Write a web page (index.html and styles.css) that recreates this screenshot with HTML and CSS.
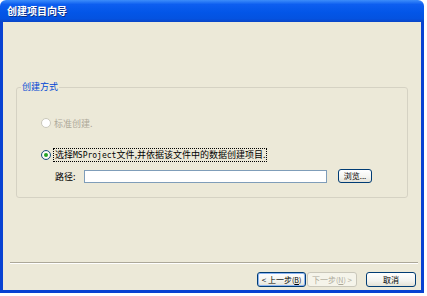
FILE: index.html
```html
<!DOCTYPE html>
<html lang="zh-CN">
<head>
  <meta charset="UTF-8">
  <title>创建项目向导</title>
  <link rel="stylesheet" href="styles.css">
</head>
<body>
  <div class="window">
    <div class="titlebar">创建项目向导</div>
    <div class="client">
      <fieldset class="group">
        <legend>创建方式</legend>
        <label class="option disabled">
          <span class="radio"></span>
          <span class="text">标准创建.</span>
        </label>
        <label class="option checked">
          <span class="radio"></span>
          <span class="text focus">选择<span class="mono">MSProject</span>文件,并依据该文件中的数据创建项目.</span>
        </label>
        <div class="path-row">
          <span class="path-label">路径:</span>
          <input class="path-input" type="text">
          <button class="btn small">浏览...</button>
        </div>
      </fieldset>
      <div class="spacer"></div>
      <div class="separator"></div>
      <div class="buttons">
        <button class="btn default">&lt; 上一步<span class="key">(<u>B</u>)</span></button>
        <button class="btn disabled">下一步<span class="key">(<u>N</u>)</span> &gt;</button>
        <button class="btn cancel">取消</button>
      </div>
    </div>
  </div>
</body>
</html>
```

FILE: styles.css
```css
* {
  margin: 0;
  padding: 0;
  box-sizing: border-box;
}
body {
  background: #fff;
  font-family: "Noto Sans CJK SC", "DejaVu Sans", sans-serif;
  font-size: 9px;
  color: #000;
}
.window {
  width: 424px;
  height: 293px;
  display: flex;
  flex-direction: column;
  border-radius: 6px 6px 0 0;
  overflow: hidden;
}
.titlebar {
  height: 22px;
  line-height: 21px;
  padding-left: 7px;
  color: #fff;
  font-weight: bold;
  font-size: 10px;
  background: linear-gradient(#3d8dfa 0%, #0d5ef0 20%, #0356e8 55%, #0452e0 85%, #0a45c6 100%);
  text-shadow: 1px 1px 0 #0a2f8a;
}
.client {
  flex: 1;
  display: flex;
  flex-direction: column;
  background: #ece9d8;
  border: 3px solid #0842d2;
  border-top: none;
}
.group {
  margin: 60px 13px 0 13px;
  height: 116px;
  border: 1px solid #d5d2c3;
  border-radius: 3px;
  padding: 0;
}
.group legend {
  color: #0046d5;
  padding: 0 1px;
  margin-left: 4px;
  line-height: 10px;
}
.option {
  display: flex;
  align-items: center;
  gap: 3px;
  height: 12px;
  margin-left: 24px;
}
.option.disabled {
  margin-top: 25px;
  color: #aca899;
}
.option.checked {
  margin-top: 20px;
}
.radio {
  width: 10px;
  height: 10px;
  border-radius: 50%;
  border: 1px solid #1c5180;
  background: radial-gradient(circle, #fff 40%, #e3e2da 100%);
  display: flex;
  align-items: center;
  justify-content: center;
}
.option.disabled .radio {
  border-color: #cac8bb;
  background: #fff;
}
.option.checked .radio::after {
  content: "";
  width: 4px;
  height: 4px;
  border-radius: 50%;
  background: #24a224;
}
.text.focus {
  outline: 1px dotted #000;
  outline-offset: 0;
  padding: 0 1px;
  line-height: 11px;
}
.mono {
  font-family: "DejaVu Sans Mono", monospace;
  font-size: 8px;
}
.path-row {
  display: flex;
  align-items: center;
  margin-top: 8px;
  padding-left: 38px;
}
.path-label {
  width: 29px;
}
.path-input {
  width: 243px;
  height: 13px;
  border: 1px solid #7f9db9;
  background: #fff;
}
.btn {
  font-family: "Noto Sans CJK SC", "DejaVu Sans", sans-serif;
  font-size: 8px;
  color: #000;
  height: 15px;
  padding: 0;
  white-space: nowrap;
  overflow: visible;
  border: 1px solid #003c74;
  border-radius: 3px;
  background: linear-gradient(#fff 0%, #f3f3ef 60%, #e3e1d6 100%);
  line-height: 12px;
}
.btn .key {
  font-size: 7px;
}
.btn u {
  text-decoration: underline;
}
.btn.small {
  width: 34px;
  margin-left: 11px;
  height: 14px;
}
.spacer {
  flex: 1;
}
.separator {
  margin: 0 3px 0 7px;
  border-top: 1px solid #aca899;
  border-bottom: 1px solid #fff;
}
.buttons {
  display: flex;
  justify-content: flex-end;
  padding: 8px 5px 3px 0;
}
.btn.default {
  width: 49px;
  box-shadow: inset 0 0 0 1px #8cb4f2;
}
.btn.disabled {
  width: 50px;
  color: #aca899;
  border-color: #c9c7ba;
  background: #f5f4ea;
  margin-left: 1px;
}
.btn.cancel {
  width: 50px;
  margin-left: 9px;
}
```
